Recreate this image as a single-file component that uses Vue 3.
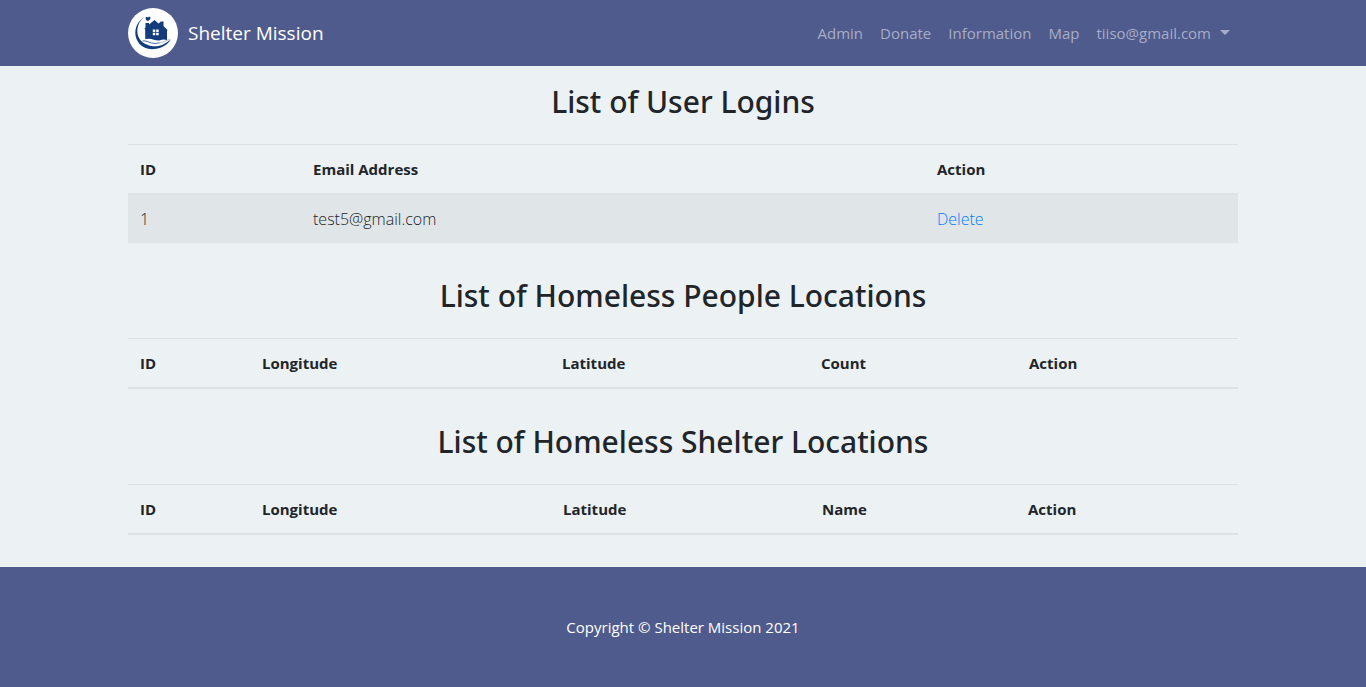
<script setup>
const links = ['Admin', 'Donate', 'Information', 'Map']

const sections = [
  {
    id: 'logins',
    title: 'List of User Logins',
    columns: [
      { label: 'ID', width: 173 },
      { label: 'Email Address', width: 624 },
      { label: 'Action', width: 313 },
    ],
    rows: [['1', 'test5@gmail.com']],
  },
  {
    id: 'people',
    title: 'List of Homeless People Locations',
    columns: [
      { label: 'ID', width: 122 },
      { label: 'Longitude', width: 300 },
      { label: 'Latitude', width: 259 },
      { label: 'Count', width: 208 },
      { label: 'Action', width: 221 },
    ],
    rows: [],
  },
  {
    id: 'shelters',
    title: 'List of Homeless Shelter Locations',
    columns: [
      { label: 'ID', width: 122 },
      { label: 'Longitude', width: 301 },
      { label: 'Latitude', width: 259 },
      { label: 'Name', width: 206 },
      { label: 'Action', width: 222 },
    ],
    rows: [],
  },
]

const share = (column, columns) =>
  (column.width / columns.reduce((sum, c) => sum + c.width, 0)) * 100 + '%'
</script>

<template>
  <div class="page">
    <header class="navbar">
      <div class="container bar">
        <a class="brand" href="#">
          <svg class="logo" viewBox="0 0 50 50" aria-hidden="true">
            <circle cx="25" cy="25" r="25" fill="#fff" />
            <path
              d="M15.500 9.500C8.500 14 5.500 23 8.500 31C11.500 38.500 19 42 27 41C34 40.200 39 37 43 31.500C38 35 34 38 28.500 38.300C20 38.500 13 35 10.300 28.500C8 21.500 10 14.500 15.500 9.500Z"
              fill="#123c7c"
            />
            <path
              d="M17.200 31V21.500L16.500 20.500L17.500 19.500V15H21V16.500L26.500 12L30.500 15.500L32.500 14V13.500H35.500V18L39.500 22L39 23V32C36 31 34 31.500 31.500 32.500C28 32.800 24 31 21.500 30.800Z"
              fill="#123c7c"
            />
            <path d="M17.500 9.500L19 8.800L20 9.500L21.500 8.500L22.500 9.500L22 11.500L20 13L18 12Z" fill="#123c7c" />
            <path d="M24.800 21.500H27.300V24H24.800ZM28.200 21.500H30.700V24H28.200ZM24.800 24.800H27.300V27.300H24.800ZM28.200 24.800H30.700V27.300H28.200Z" fill="#fff" />
            <path
              d="M14.500 33C18 32.500 20.500 34 23.500 35C26.500 35.800 29.500 35.500 31.500 34.500"
              fill="none"
              stroke="#4a6a9f"
              stroke-width="1"
            />
            <path
              d="M31 35C35 34.500 38 32.500 42 31.500"
              fill="none"
              stroke="#a9b9d2"
              stroke-width="1"
            />
          </svg>
          <span>Shelter Mission</span>
        </a>
        <nav class="links">
          <a v-for="link in links" :key="link" href="#">{{ link }}</a>
          <a class="account" href="#">tiiso@gmail.com<span class="caret"></span></a>
        </nav>
      </div>
    </header>

    <main class="container content">
      <section v-for="section in sections" :key="section.id">
        <h2 :id="section.id">{{ section.title }}</h2>
        <table :aria-labelledby="section.id">
          <colgroup>
            <col
              v-for="column in section.columns"
              :key="column.label"
              :style="{ width: share(column, section.columns) }"
            />
          </colgroup>
          <thead>
            <tr>
              <th v-for="column in section.columns" :key="column.label" scope="col">{{ column.label }}</th>
            </tr>
          </thead>
          <tbody v-if="section.rows.length">
            <tr v-for="row in section.rows" :key="row[0]">
              <td v-for="cell in row" :key="cell">{{ cell }}</td>
              <td><a href="#">Delete</a></td>
            </tr>
          </tbody>
        </table>
      </section>
    </main>

    <footer>
      <p>Copyright © Shelter Mission 2021</p>
    </footer>
  </div>
</template>

<style>
body {
  margin: 0;
  background: #ecf1f4;
}
</style>

<style scoped>
.page {
  display: flex;
  flex-direction: column;
  min-height: 100vh;
  color: #212529;
  font-family: "Open Sans", "Noto Sans", sans-serif;
  font-size: 15px;
  line-height: 24px;
}

a {
  text-decoration: none;
}

.container {
  box-sizing: border-box;
  width: 100%;
  max-width: 1110px;
  margin: 0 auto;
}

.navbar {
  background: #4f5b8c;
}

.bar {
  display: flex;
  align-items: center;
  justify-content: space-between;
  padding: 8px 0;
}

.brand {
  display: flex;
  align-items: center;
  gap: 10px;
  color: #fff;
  font-size: 19px;
}

.logo {
  width: 50px;
  height: 50px;
}

.links {
  display: flex;
  align-items: center;
  gap: 17px;
  padding-right: 8px;
}

.links a {
  color: #a7adc6;
}

.account {
  display: flex;
  align-items: center;
  gap: 9px;
}

.caret {
  border: 5px solid transparent;
  border-top-color: #a7adc6;
  border-bottom: 0;
  margin-bottom: 2px;
}

.content {
  display: flex;
  flex: 1;
  flex-direction: column;
  gap: 33px;
  padding: 16px 0 32px;
}

h2 {
  margin: 0 0 22px;
  font-family: "Noto Sans", "Open Sans", sans-serif;
  font-size: 30px;
  font-weight: 500;
  line-height: 40px;
  text-align: center;
}

table {
  width: 100%;
  table-layout: fixed;
  border-spacing: 0;
}

th,
td {
  padding: 12px;
  text-align: left;
}

th {
  border-top: 1px solid #dee2e6;
  border-bottom: 2px solid #dee2e6;
  font-weight: 700;
}

td {
  background: #e0e5e8;
  font-size: 16px;
  font-weight: 300;
}

td a {
  color: #007bff;
}

footer {
  padding: 48px 0;
  background: #4f5b8c;
  color: #fff;
  text-align: center;
}

footer p {
  margin: 0;
}
</style>
